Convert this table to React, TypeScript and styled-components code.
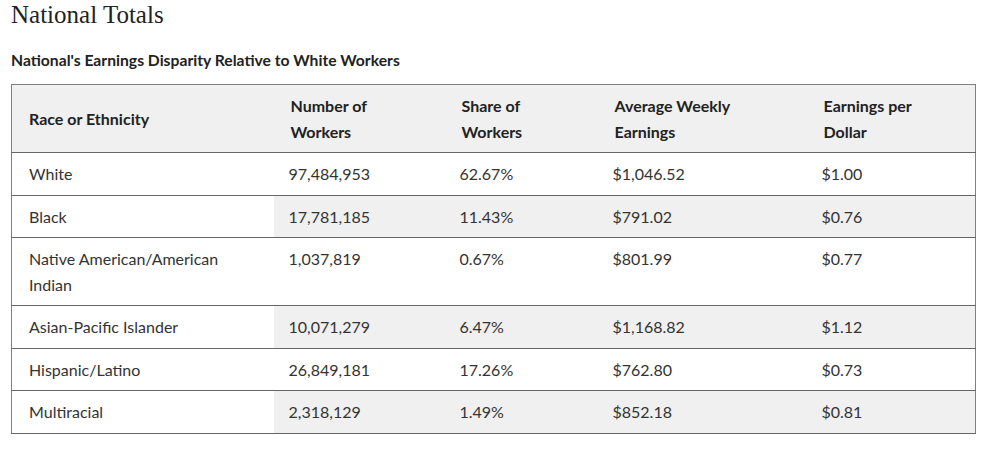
import styled, { createGlobalStyle } from 'styled-components'

const GlobalStyle = createGlobalStyle`
    body {
        margin: 0;
        background: #fff;
        font-family: Lato, "Noto Sans", sans-serif;
        color: #333;
    }
    * {
        box-sizing: border-box;
    }
`

type Row = {
    race: string
    workers: string
    share: string
    weekly: string
    perDollar: string
}

const rows: Row[] = [
    { race: 'White', workers: '97,484,953', share: '62.67%', weekly: '$1,046.52', perDollar: '$1.00' },
    { race: 'Black', workers: '17,781,185', share: '11.43%', weekly: '$791.02', perDollar: '$0.76' },
    { race: 'Native American/American Indian', workers: '1,037,819', share: '0.67%', weekly: '$801.99', perDollar: '$0.77' },
    { race: 'Asian-Pacific Islander', workers: '10,071,279', share: '6.47%', weekly: '$1,168.82', perDollar: '$1.12' },
    { race: 'Hispanic/Latino', workers: '26,849,181', share: '17.26%', weekly: '$762.80', perDollar: '$0.73' },
    { race: 'Multiracial', workers: '2,318,129', share: '1.49%', weekly: '$852.18', perDollar: '$0.81' },
]

//헤더: 두 줄로 나뉘는 컬럼
const headers = [
    { w: 262, lines: ['Race or Ethnicity'] },
    { w: 171, lines: ['Number of', 'Workers'] },
    { w: 153, lines: ['Share of', 'Workers'] },
    { w: 209, lines: ['Average Weekly', 'Earnings'] },
    { w: 169, lines: ['Earnings per', 'Dollar'] },
]

const Page = styled.div`
    padding: 0 13px 0 11px;
`

const Title = styled.h2`
    font-family: "Liberation Serif", serif;
    font-size: 25px;
    font-weight: 400;
    color: #222;
    margin: 0;
    padding-top: 1px;
    line-height: 28px;
`

const Caption = styled.h4`
    font-size: 15.7px;
    font-weight: 700;
    color: #222;
    margin: 21px 0 14px;
    line-height: 20px;
`

const Table = styled.table`
    width: 100%;
    border-collapse: collapse;
    border: 1px solid #808080;
    font-size: 16px;
    line-height: 25.5px;
    table-layout: fixed;
`

const HeadCell = styled.th<{ w: number }>`
    width: ${props => props.w}px;
    background: #f0f0f0;
    text-align: left;
    font-weight: 700;
    color: #222;
    padding: 8px 16px 8px 17px;
    border-bottom: 1px solid #666;
    vertical-align: middle;
`

const BodyRow = styled.tr<{ striped: boolean }>`
    border-bottom: 1px solid #666;
    td {
        background: ${props => props.striped ? '#f0f0f0' : '#fff'};
    }
`

const RowHead = styled.th`
    text-align: left;
    font-weight: 400;
    padding: 8px 16px 8px 17px;
    background: #fff;
    vertical-align: top;
`

const Cell = styled.td`
    padding: 8px 16px 8px 15px;
    vertical-align: top;
`

const App = () => {
    return (
        <Page>
            <GlobalStyle />
            <Title>National Totals</Title>
            <Caption>National's Earnings Disparity Relative to White Workers</Caption>
            <Table>
                <thead>
                    <tr>
                        {headers.map(h => (
                            <HeadCell key={h.lines[0]} w={h.w}>
                                {h.lines.map((l, i) => (
                                    <span key={l}>{i > 0 && <br />}{l}</span>
                                ))}
                            </HeadCell>
                        ))}
                    </tr>
                </thead>
                <tbody>
                    {rows.map((r, i) => (
                        <BodyRow key={r.race} striped={i % 2 === 1}>
                            <RowHead>{r.race}</RowHead>
                            <Cell>{r.workers}</Cell>
                            <Cell>{r.share}</Cell>
                            <Cell>{r.weekly}</Cell>
                            <Cell>{r.perDollar}</Cell>
                        </BodyRow>
                    ))}
                </tbody>
            </Table>
        </Page>
    )
}

export default App
